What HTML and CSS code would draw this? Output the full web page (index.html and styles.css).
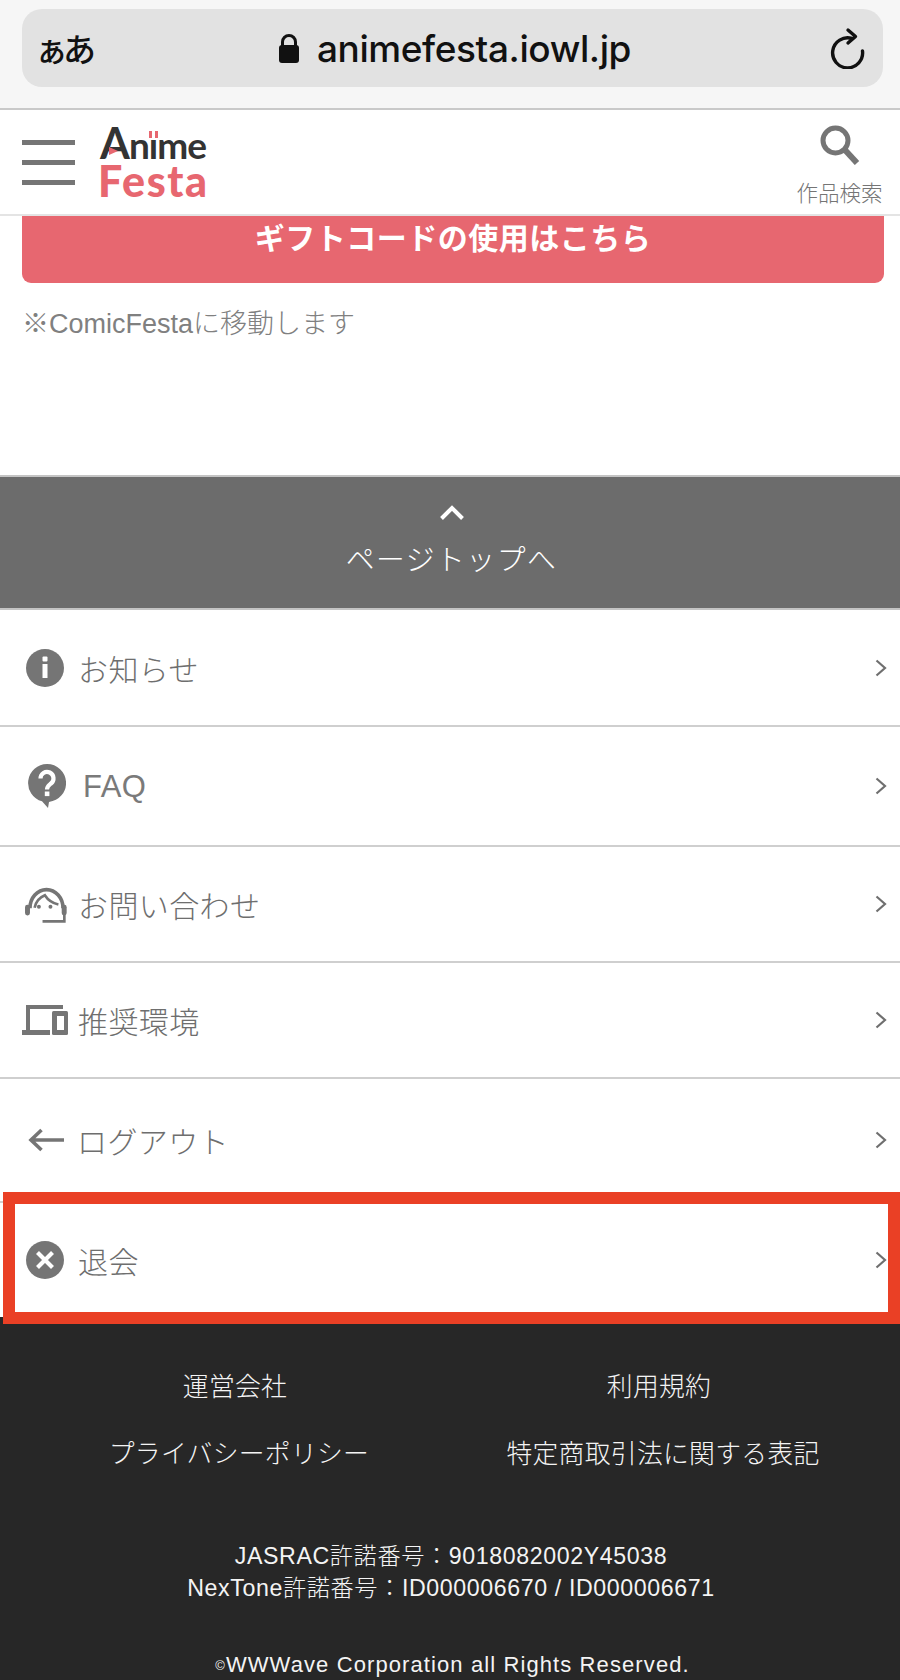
FILE: index.html
```html
<!DOCTYPE html>
<html lang="ja">
<head>
<meta charset="utf-8">
<title>AnimeFesta</title>
<link rel="stylesheet" href="styles.css">
</head>
<body>
<div class="page">
  <div class="browser">
    <div class="pill">
      <span class="aa"><small>ぁ</small>あ</span>
      <div class="url">
        <svg class="lock" viewBox="0 0 20 29"><path d="M3.500 12V8a6.500 6.500 0 0 1 13 0v4" fill="none" stroke="#111" stroke-width="3"/><rect x="0" y="11" width="20" height="18" rx="3" fill="#111"/></svg>
        <span>animefesta.iowl.jp</span>
      </div>
      <svg class="reload" viewBox="9 7 36 42"><path d="M41.500 31A15 15 0 1 1 31 18.500" fill="none" stroke="#111" stroke-width="3.400" stroke-linecap="round"/><path d="M27 10l7.500 6.500L27 23" fill="none" stroke="#111" stroke-width="3.400" stroke-linecap="round" stroke-linejoin="round"/></svg>
    </div>
  </div>
  <header class="site-head">
    <div class="burger"><i></i><i></i><i></i></div>
    <div class="logo">
      <span class="logo-top"><b class="logo-a">A</b>n<b class="logo-i">i</b>me</span>
      <span class="logo-bottom">Festa</span>
    </div>
    <div class="search">
      <svg class="search-icon" viewBox="0 0 40 40"><circle cx="15.500" cy="15.500" r="12.500" fill="none" stroke="#757575" stroke-width="5"/><path d="M25 25l12 13" stroke="#757575" stroke-width="6"/></svg>
      <span>作品検索</span>
    </div>
  </header>
  <main class="content">
    <a class="gift">ギフトコードの使用はこちら</a>
    <p class="note">※ComicFestaに移動します</p>
  </main>
  <div class="to-top">
    <svg class="up" viewBox="0 0 26 16"><path d="M2.500 13.500L13 3l10.500 10.500" fill="none" stroke="#fff" stroke-width="4"/></svg>
    <span>ページトップへ</span>
  </div>
  <nav class="menu">
    <a class="row r117">
      <svg class="ico" viewBox="0 0 40 40"><circle cx="20" cy="20" r="19" fill="#757575"/><rect x="17.500" y="8.500" width="5" height="5" rx="1" fill="#fff"/><rect x="17.500" y="16" width="5" height="14" fill="#fff"/></svg>
      <span class="label">お知らせ</span>
      <svg class="chev" viewBox="0 0 12 18"><path d="M1.500 1.500L10 9l-8.500 7.500" fill="none" stroke="#6f6f6f" stroke-width="2.200"/></svg>
    </a>
    <a class="row r120">
      <svg class="ico ico-faq" viewBox="0 0 38 44"><path d="M19 0a19 19 0 0 1 2 37.900L20 44l-6-6.700A19 19 0 0 1 19 0z" fill="#757575"/><path d="M12.500 14.500a6.500 6.500 0 1 1 10.500 5c-2.500 2-4 2.500-4 6" fill="none" stroke="#fff" stroke-width="4.200"/><rect x="16.800" y="27.500" width="4.600" height="4.600" fill="#fff"/></svg>
      <span class="label label-faq">FAQ</span>
      <svg class="chev" viewBox="0 0 12 18"><path d="M1.500 1.500L10 9l-8.500 7.500" fill="none" stroke="#6f6f6f" stroke-width="2.200"/></svg>
    </a>
    <a class="row r116">
      <svg class="ico ico-head" viewBox="12 15 136 118"><path d="M30 85A50 56 0 0 1 130 85" fill="none" stroke="#757575" stroke-width="11"/><path d="M44 84C48 64 60 52 75 46C84 60 98 70 116 74" fill="none" stroke="#757575" stroke-width="8"/><rect x="15" y="75" width="15" height="32" rx="7" fill="#757575"/><rect x="126" y="75" width="15" height="32" rx="7" fill="#757575"/><path d="M134 104V125H68" fill="none" stroke="#757575" stroke-width="8"/><circle cx="57" cy="81" r="6" fill="#757575"/><circle cx="92" cy="81" r="6" fill="#757575"/></svg>
      <span class="label label-head">お問い合わせ</span>
      <svg class="chev" viewBox="0 0 12 18"><path d="M1.500 1.500L10 9l-8.500 7.500" fill="none" stroke="#6f6f6f" stroke-width="2.200"/></svg>
    </a>
    <a class="row r116">
      <svg class="ico ico-dev" viewBox="0 0 46 30"><path d="M6 25V2H41" fill="none" stroke="#757575" stroke-width="4"/><rect x="0" y="25" width="28" height="5" fill="#757575"/><rect x="30" y="6" width="16" height="24" rx="1.500" fill="#757575"/><rect x="35" y="11" width="7" height="14" fill="#fff"/></svg>
      <span class="label label-dev">推奨環境</span>
      <svg class="chev" viewBox="0 0 12 18"><path d="M1.500 1.500L10 9l-8.500 7.500" fill="none" stroke="#6f6f6f" stroke-width="2.200"/></svg>
    </a>
    <a class="row r124">
      <svg class="ico ico-arrow" viewBox="0 0 36 24"><path d="M36 12H4M13.500 2L3 12l10.500 10" fill="none" stroke="#757575" stroke-width="3.600"/></svg>
      <span class="label">ログアウト</span>
      <svg class="chev" viewBox="0 0 12 18"><path d="M1.500 1.500L10 9l-8.500 7.500" fill="none" stroke="#6f6f6f" stroke-width="2.200"/></svg>
    </a>
    <a class="row r114 last">
      <svg class="ico" viewBox="0 0 40 40"><circle cx="20" cy="20" r="19" fill="#757575"/><path d="M12.500 12.500l15 15M27.500 12.500l-15 15" stroke="#fff" stroke-width="4.200"/></svg>
      <span class="label">退会</span>
      <svg class="chev" viewBox="0 0 12 18"><path d="M1.500 1.500L10 9l-8.500 7.500" fill="none" stroke="#6f6f6f" stroke-width="2.200"/></svg>
    </a>
    <div class="highlight"></div>
  </nav>
  <footer class="foot">
    <div class="links">
      <a class="short">運営会社</a><a class="short">利用規約</a>
      <a>プライバシーポリシー</a><a>特定商取引法に関する表記</a>
    </div>
    <p class="licence">JASRAC許諾番号：9018082002Y45038<br>NexTone許諾番号：ID000006670 / ID000006671</p>
    <p class="copy"><small>©</small>WWWave Corporation all Rights Reserved.</p>
  </footer>
</div>
</body>
</html>
```
FILE: styles.css
```css
* { box-sizing: border-box; }
html, body { margin: 0; padding: 0; }
body {
  background: #fff;
  font-family: "Liberation Sans", "Noto Sans CJK JP", sans-serif;
  color: #757575;
}
.page { width: 900px; height: 1680px; overflow: hidden; }

.browser {
  height: 110px;
  background: #f6f6f6;
  border-bottom: 2px solid #c9c9c9;
  padding: 9px 17px 0 22px;
}
.pill {
  height: 78px;
  background: #e2e2e2;
  border-radius: 20px;
  display: flex;
  align-items: center;
  justify-content: space-between;
  padding: 0 17px 0 13px;
}
.aa { font: 500 33px/1 "Noto Sans CJK JP", sans-serif; color: #111; white-space: nowrap; }
.aa small { font-size: 33px; margin-right: -5px; }
.url {
  display: flex;
  align-items: center;
  gap: 18px;
  font: 500 37px/1 "Inter", "Liberation Sans", sans-serif;
  letter-spacing: -0.4px;
  color: #111;
  margin-right: 16px;
}
.lock { width: 20px; height: 29px; }
.reload { width: 36px; height: 42px; }

.site-head {
  height: 106px;
  border-bottom: 2px solid #e4e4e4;
  display: flex;
  align-items: flex-start;
  padding-left: 22px;
  position: relative;
  z-index: 1;
  background: #fff;
}
.burger {
  width: 53px;
  margin-top: 30px;
  display: flex;
  flex-direction: column;
  gap: 15px;
}
.burger i { display: block; height: 5px; background: #757575; }
.logo {
  margin: 9px 0 0 25px;
  display: flex;
  flex-direction: column;
  width: 108px;
  font-family: "Lato", sans-serif;
  white-space: nowrap;
}
.logo-top {
  height: 47px;
  font-size: 37px;
  line-height: 47px;
  font-weight: 700;
  color: #333;
  letter-spacing: -1px;
}
.logo-a { position: relative; font-size: 43px; font-weight: 700; }
.logo-a::after {
  content: "";
  position: absolute;
  left: 9px;
  top: 30px;
  border-left: 9px solid #e76770;
  border-top: 4px solid transparent;
  border-bottom: 4px solid transparent;
}
.logo-i { position: relative; font-weight: 700; }
.logo-i::after {
  content: "";
  position: absolute;
  left: 0;
  top: 9px;
  width: 9px;
  height: 7px;
  background: linear-gradient(90deg, #e76770 3px, #fff 3px, #fff 6px, #e76770 6px);
}
.logo-bottom {
  height: 43px;
  font-size: 43px;
  line-height: 43px;
  font-weight: 900;
  color: #e76770;
  margin: -7px 0 0 -2px;
  letter-spacing: 1.600px;
}
.search {
  margin-left: auto;
  width: 87px;
  margin-right: 17px;
  padding-top: 15px;
  display: flex;
  flex-direction: column;
  align-items: center;
  font: 300 21.500px/1 "Noto Sans CJK JP", sans-serif;
  white-space: nowrap;
}
.search-icon { width: 40px; height: 40px; margin-bottom: 16px; }

.content { height: 260px; padding: 0 16px 0 22px; margin-top: -1px; }
.gift {
  display: block;
  height: 68px;
  background: #e76770;
  border-radius: 0 0 9px 9px;
  color: #fff;
  font: 700 30px/42px "Noto Sans CJK JP", sans-serif;
  text-align: center;
  letter-spacing: 0.5px;
}
.note {
  margin: 23px 0 0;
  font: 300 27px/36px "Liberation Sans", "Noto Sans CJK JP", sans-serif;
  color: #808080;
}

.to-top {
  height: 135px;
  background: #6c6c6c;
  border-top: 2px solid #c4c4c4;
  border-bottom: 2px solid #c4c4c4;
  color: #fff;
  display: flex;
  flex-direction: column;
  align-items: center;
  padding: 28px 0 0 3px;
  font: 300 28.800px/40px "Noto Sans CJK JP", sans-serif;
  letter-spacing: 1.500px;
}
.up { width: 26px; height: 16px; margin-bottom: 17px; }

.menu { position: relative; }
.row {
  display: flex;
  align-items: center;
  padding: 0 13px 0 25px;
  border-bottom: 2px solid #cfcfcf;
  font: 300 30px/1 "Noto Sans CJK JP", sans-serif;
  letter-spacing: 0.4px;
  color: #6e6e6e;
}
.r116 { height: 116px; }
.r117 { height: 117px; }
.r120 { height: 120px; }
.r124 { height: 124px; }
.r114 { height: 114px; }
.last { border-bottom: 0; }
.ico { width: 40px; height: 40px; flex: none; }
.ico-faq { width: 38px; height: 44px; margin-left: 3px; }
.ico-head { width: 45px; height: 39px; margin-left: -1px; }
.ico-dev { width: 46px; height: 30px; margin-left: -3px; }
.ico-arrow { width: 36px; height: 24px; margin-left: 3px; }
.label { margin-left: 13px; }
.label-faq { margin-left: 17px; font-family: "Liberation Sans", sans-serif; font-size: 31px; font-weight: 400; color: #7a7a7a; }
.label-head { margin-left: 9px; }
.label-dev { margin-left: 10px; }
.chev { width: 12px; height: 18px; margin-left: auto; }
.highlight {
  position: absolute;
  left: 3px;
  right: 0;
  bottom: -7px;
  height: 132px;
  border: 12px solid #ea4025;
}

.foot {
  background: #272727;
  color: #f4f4f4;
  height: 366px;
  padding-top: 49px;
  text-align: center;
  font-family: "Noto Sans CJK JP", sans-serif;
  font-weight: 300;
}
.links {
  display: grid;
  grid-template-columns: 424px 424px;
  margin-left: 27px;
  row-gap: 29px;
  font-size: 25.800px;
  line-height: 38px;
  letter-spacing: 0.3px;
}
.short { padding-right: 8px; }
.licence {
  margin: 69px 0 0;
  padding-left: 2px;
  font: 300 23.200px/32px "Liberation Sans", "Noto Sans CJK JP", sans-serif;
  letter-spacing: 0.6px;
}
.copy {
  margin: 45px 0 0;
  padding-left: 5px;
  font: 400 22px/32px "Liberation Sans", sans-serif;
  letter-spacing: 1.100px;
}
.copy small { font-size: 13px; vertical-align: 2px; }
```
